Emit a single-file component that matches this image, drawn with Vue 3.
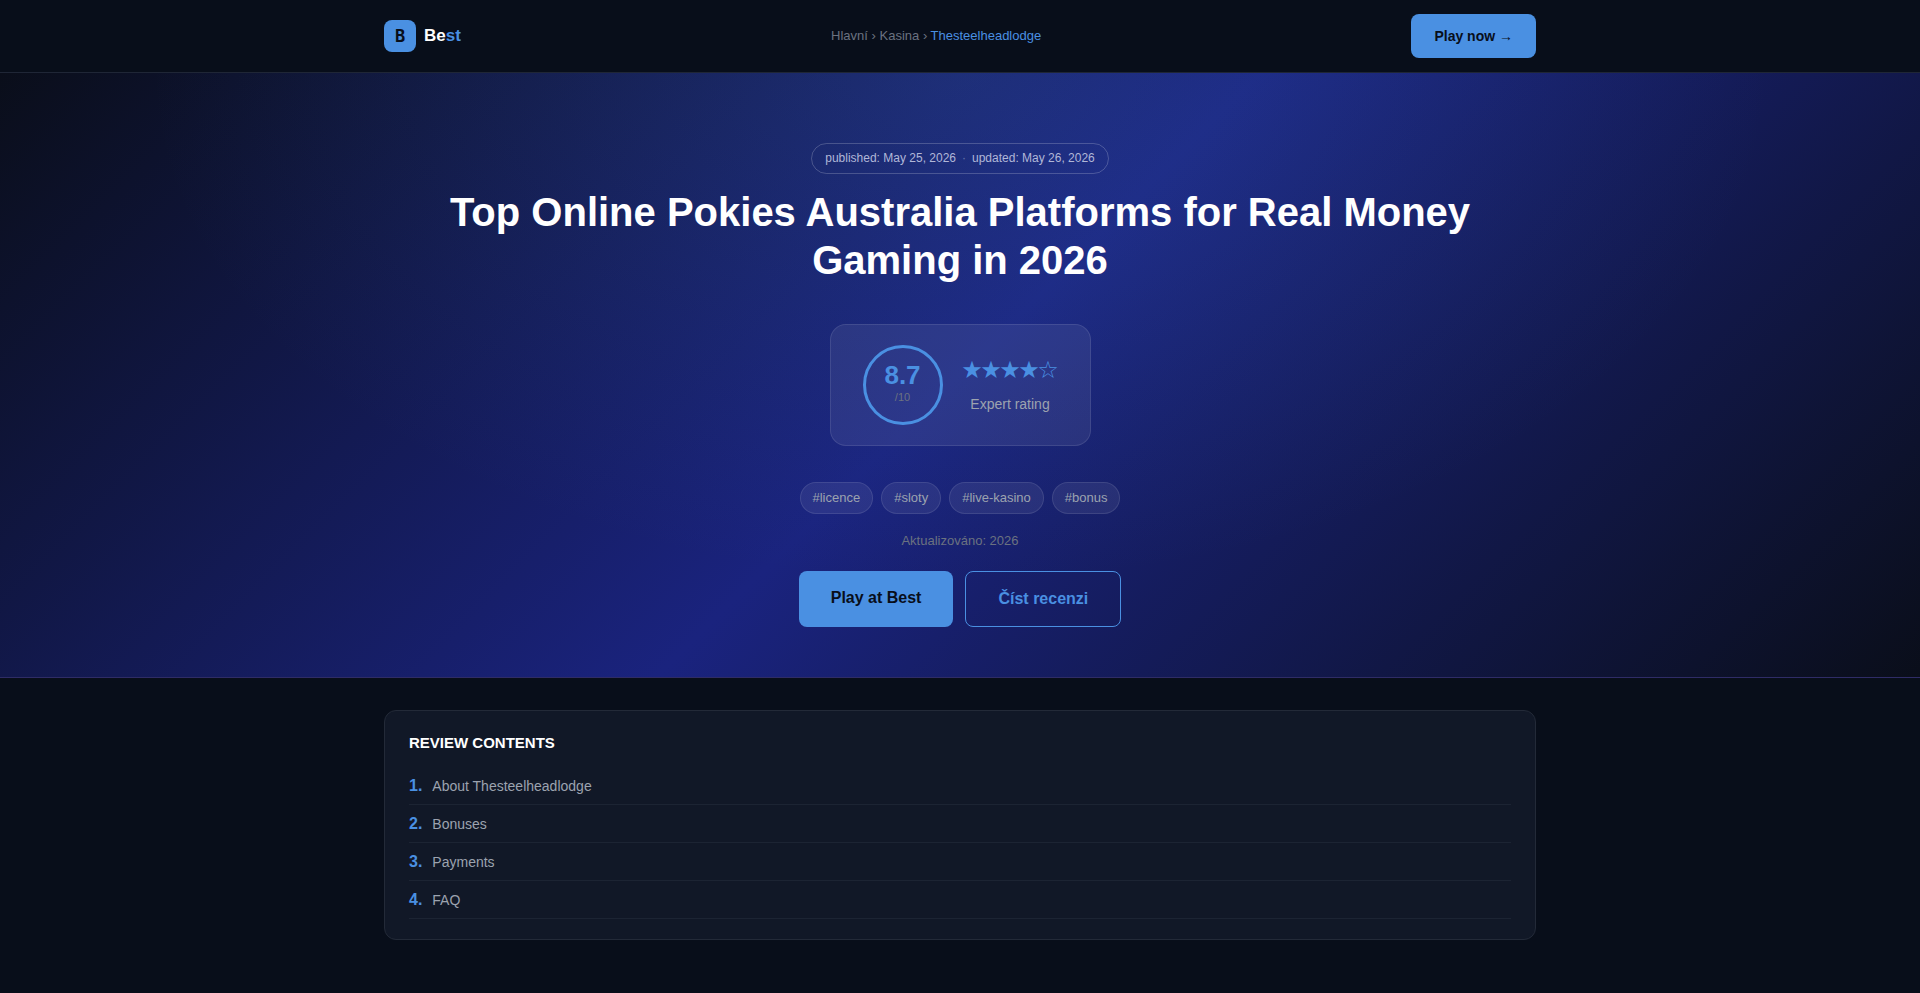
<script setup>
const crumbs = ['Hlavní', 'Kasina']
const stars = ['★', '★', '★', '★', '☆']
const tags = ['#licence', '#sloty', '#live-kasino', '#bonus']
const contents = ['About Thesteelheadlodge', 'Bonuses', 'Payments', 'FAQ']
</script>

<template>
  <div class="page">
    <header class="topbar">
      <div class="topbar-inner">
        <a class="brand" href="#">
          <span class="brand-mark">B</span>
          <span class="brand-name">Be<span class="accent">st</span></span>
        </a>
        <nav class="crumbs" aria-label="Breadcrumb">
          <template v-for="crumb in crumbs" :key="crumb"><a href="#">{{ crumb }}</a> › </template>
          <span class="accent">Thesteelheadlodge</span>
        </nav>
        <a class="button small" href="#">Play now →</a>
      </div>
    </header>

    <section class="hero">
      <div class="hero-inner">
        <div class="dates">
          <span>published: May 25, 2026</span>
          <span class="dot">·</span>
          <span>updated: May 26, 2026</span>
        </div>
        <h1>Top Online Pokies Australia Platforms for Real Money Gaming in 2026</h1>
        <div class="rating">
          <div class="score">
            <span class="score-value">8.7</span>
            <span class="score-max">/10</span>
          </div>
          <div class="verdict">
            <div class="stars">
              <span v-for="(star, i) in stars" :key="i" class="star">{{ star }}</span>
            </div>
            <div class="verdict-label">Expert rating</div>
          </div>
        </div>
        <div class="tags">
          <span v-for="tag in tags" :key="tag" class="tag">{{ tag }}</span>
        </div>
        <p class="refreshed">Aktualizováno: 2026</p>
        <div class="actions">
          <a class="button large" href="#">Play at Best</a>
          <a class="button large outline" href="#contents">Číst recenzi</a>
        </div>
      </div>
    </section>

    <main>
      <nav id="contents" class="contents" aria-labelledby="contents-title">
        <h2 id="contents-title">REVIEW CONTENTS</h2>
        <ol>
          <li v-for="(item, i) in contents" :key="item">
            <span class="number">{{ i + 1 }}.</span>
            <a href="#">{{ item }}</a>
          </li>
        </ol>
      </nav>
    </main>
  </div>
</template>

<style>
body {
  margin: 0;
  background: #080e1a;
}
</style>

<style scoped>
* {
  box-sizing: border-box;
}
.page {
  min-height: 100vh;
  background: #080e1a;
  color: #fff;
  font-family: "Liberation Sans", Arial, sans-serif;
  font-size: 16px;
  line-height: 26px;
}
a {
  color: inherit;
  text-decoration: none;
}
.accent {
  color: #4a90e2;
}
.topbar {
  padding: 14px 24px;
  border-bottom: 1px solid #1f2636;
}
.topbar-inner {
  display: flex;
  align-items: center;
  justify-content: space-between;
  max-width: 1152px;
  margin: 0 auto;
}
.brand {
  display: flex;
  align-items: center;
  gap: 8px;
}
.brand-mark {
  display: grid;
  place-items: center;
  width: 32px;
  height: 32px;
  border-radius: 8px;
  background: #4a90e2;
  color: #080e1a;
  font-family: "DejaVu Sans Mono", monospace;
  font-size: 17px;
  font-weight: 700;
}
.brand-name {
  font-size: 17px;
  font-weight: 700;
}
.crumbs {
  color: #6b7280;
  font-size: 13px;
}
.button {
  border-radius: 8px;
  background: #4a90e2;
  color: #080e1a;
  font-weight: 700;
}
.button.small {
  padding: 9px 23px;
  font-size: 14px;
}
.hero {
  padding: 70px 24px 50px;
  border-bottom: 1px solid #2f2c66;
  background:
    radial-gradient(ellipse at 50% 0%, rgba(74, 144, 226, 0.15) 0%, transparent 60%),
    linear-gradient(135deg, #0a0e1a 0%, #1a237e 50%, #0a0e1a 100%);
}
.hero-inner {
  display: flex;
  flex-direction: column;
  align-items: center;
  max-width: 1152px;
  margin: 0 auto;
  text-align: center;
}
.dates {
  display: flex;
  gap: 6px;
  padding: 4px 13px;
  border: 1px solid rgba(255, 255, 255, 0.2);
  border-radius: 16px;
  color: #b1b7d8;
  font-size: 12px;
  line-height: 21px;
}
.dot {
  opacity: 0.5;
}
h1 {
  max-width: 1100px;
  margin: 14px 0 40px;
  font-size: 40px;
  line-height: 48px;
}
.rating {
  display: flex;
  align-items: center;
  gap: 20px;
  padding: 20px 32px;
  border: 1px solid rgba(255, 255, 255, 0.1);
  border-radius: 16px;
  background: rgba(255, 255, 255, 0.07);
}
.score {
  display: flex;
  flex-direction: column;
  align-items: center;
  justify-content: center;
  width: 80px;
  height: 80px;
  padding-bottom: 2px;
  border: 3px solid #4a90e2;
  border-radius: 50%;
}
.score-value {
  color: #4a90e2;
  font-size: 26px;
  font-weight: 700;
  line-height: 26px;
}
.score-max {
  color: #6b7280;
  font-size: 11px;
  line-height: 18px;
}
.stars {
  display: flex;
  color: #4a90e2;
  font-family: "DejaVu Sans", sans-serif;
  font-size: 24px;
  line-height: 34px;
}
.star {
  display: flex;
  justify-content: center;
  width: 19px;
}
.verdict-label {
  margin-top: 4px;
  color: #9ca3af;
  font-size: 14px;
}
.tags {
  display: flex;
  flex-wrap: wrap;
  justify-content: center;
  gap: 8px;
  margin-top: 36px;
}
.tag {
  padding: 4px 12px;
  border: 1px solid rgba(255, 255, 255, 0.1);
  border-radius: 16px;
  background: rgba(255, 255, 255, 0.07);
  color: #9ca3af;
  font-size: 13px;
  line-height: 22px;
}
.refreshed {
  margin: 14px 0 17px;
  color: #6b7280;
  font-size: 13px;
}
.actions {
  display: flex;
  gap: 12px;
}
.button.large {
  padding: 14px 32px;
}
.button.outline {
  border: 1px solid #4a90e2;
  background: transparent;
  color: #4a90e2;
}
main {
  max-width: 1152px;
  margin: 32px auto;
}
.contents {
  padding: 20px 24px;
  border: 1px solid #232a38;
  border-radius: 12px;
  background: #111827;
}
h2 {
  margin: 0 0 12px;
  font-size: 15px;
  line-height: 24px;
}
ol {
  margin: 0;
  padding: 0;
  list-style: none;
}
li {
  display: flex;
  align-items: baseline;
  gap: 10px;
  padding: 6px 0 5px;
  border-bottom: 1px solid #1c2433;
  line-height: 25px;
}
.number {
  color: #4a90e2;
  font-weight: 700;
}
li a {
  color: #9ca3af;
  font-size: 14px;
}
</style>
